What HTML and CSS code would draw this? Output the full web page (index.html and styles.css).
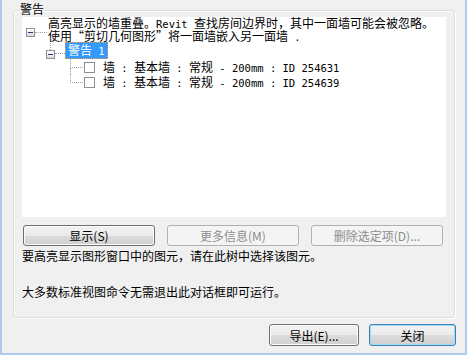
FILE: index.html
```html
<!DOCTYPE html>
<html lang="zh-CN">
<head>
  <meta charset="UTF-8">
  <title>警告</title>
  <link rel="stylesheet" href="styles.css">
</head>
<body>
  <div class="window">
    <fieldset class="group">
      <legend>警告</legend>

      <div class="tree">
        <div class="node-root">
          <div class="branch">
            <span class="toggle"></span>
            <span class="hline"></span>
          </div>
          <div class="root-text">高亮显示的墙重叠。<span class="en">Revit </span>查找房间边界时，其中一面墙可能会被忽略。<br>使用“剪切几何图形”将一面墙嵌入另一面墙<span class="en"> .</span></div>
        </div>

        <div class="node-warn">
          <div class="toggle-col">
            <span class="stem"></span>
            <span class="toggle"></span>
          </div>
          <span class="hline short"></span>
          <span class="label selected">警告<span class="en"> 1</span></span>
        </div>

        <div class="children">
          <div class="leaf">
            <span class="elbow"></span>
            <span class="check"></span>
            <span class="leaf-text">墙<span class="en"> : </span>基本墙<span class="en"> : </span>常规<span class="en"> - 200mm : ID 254631</span></span>
          </div>
          <div class="leaf">
            <span class="elbow"></span>
            <span class="check"></span>
            <span class="leaf-text">墙<span class="en"> : </span>基本墙<span class="en"> : </span>常规<span class="en"> - 200mm : ID 254639</span></span>
          </div>
        </div>
      </div>

      <div class="actions">
        <button class="btn wide">显示(S)</button>
        <button class="btn wide" disabled>更多信息(M)</button>
        <button class="btn wide" disabled>删除选定项(D)...</button>
      </div>

      <p class="hint">要高亮显示图形窗口中的图元，请在此树中选择该图元。</p>
      <p class="hint gap">大多数标准视图命令无需退出此对话框即可运行。</p>
    </fieldset>

    <div class="footer">
      <button class="btn export">导出(E)...</button>
      <button class="btn close default">关闭</button>
    </div>
  </div>
</body>
</html>
```

FILE: styles.css
```css
body {
  margin: 0;
  font-family: "Noto Sans CJK SC", "Liberation Sans", sans-serif;
  font-size: 12px;
  color: #000;
  background: #f0f0f0;
}
.window {
  box-sizing: border-box;
  width: 467px;
  height: 355px;
  padding-top: 3px;
  background: #f0f0f0;
  border: 2px solid #aecbec;
  border-top: 0;
}
.en {
  font-family: "DejaVu Sans Mono", "Liberation Mono", monospace;
  font-size: 10.5px;
}

/* group box */
.group {
  margin: 0 10px 0 11px;
  padding: 0 8px 19px 8px;
  border: 1px solid #d5dfe5;
  border-radius: 3px;
  box-shadow: inset 1px 1px 0 #fff, 1px 1px 0 #fff;
}
.group legend {
  margin-left: -3px;
  padding: 0 1px;
  line-height: 12px;
  height: 14px;
}

/* tree */
.tree {
  height: 200px;
  background: #fff;
  white-space: nowrap;
}
.node-root {
  display: flex;
  padding-left: 4px;
}
.branch {
  display: flex;
  align-items: center;
  height: 9px;
  margin-top: 11px;
}
.toggle {
  position: relative;
  box-sizing: border-box;
  width: 9px;
  height: 9px;
  border: 1px solid #919191;
  background: linear-gradient(#ffffff, #dcdcdc);
}
.toggle::after {
  content: "";
  position: absolute;
  left: 1px;
  top: 3px;
  width: 5px;
  height: 1px;
  background: #1e3c72;
}
.hline {
  width: 12px;
  height: 0;
  border-top: 1px dotted #a0a0a0;
}
.root-text {
  margin-left: 1px;
  line-height: 12px;
}
.node-warn {
  display: flex;
  height: 16px;
  padding-left: 24px;
}
.toggle-col {
  display: flex;
  flex-direction: column;
  width: 9px;
}
.stem {
  height: 7px;
  margin-left: 4px;
  border-left: 1px dotted #a0a0a0;
}
.hline.short {
  width: 10px;
  height: 5px;
  align-self: flex-end;
}
.label {
  align-self: flex-end;
  padding: 0 2px;
  line-height: 13px;
  border: 1px solid transparent;
}
.label.selected {
  background: #3399ff;
  color: #fff;
  border: 1px dotted #f29b3f;
}
.children {
  padding-left: 48px;
}
.leaf {
  display: flex;
  height: 15px;
  line-height: 15px;
}
.elbow {
  display: flex;
  flex-direction: column;
  width: 13px;
}
.elbow::before {
  content: "";
  height: 8px;
  border-left: 1px dotted #a0a0a0;
  border-bottom: 1px dotted #a0a0a0;
}
.elbow::after {
  content: "";
  flex: 1;
  border-left: 1px dotted #a0a0a0;
}
.leaf:last-child .elbow::after {
  border-left: 0;
}
.check {
  box-sizing: border-box;
  width: 11px;
  height: 11px;
  margin: 3px 0 0 1px;
  border: 1px solid #8e8f8f;
  background: #fff;
}
.leaf-text {
  margin-left: 8px;
}

/* buttons */
.btn {
  box-sizing: border-box;
  height: 21px;
  padding: 0;
  font-family: inherit;
  font-size: 12px;
  line-height: 19px;
  color: #000;
  border: 1px solid #707070;
  border-radius: 3px;
  background: linear-gradient(#f2f2f2 0%, #ebebeb 50%, #dddddd 50%, #cfcfcf 100%);
  box-shadow: inset 0 0 0 1px #fbfbfb;
}
.btn:disabled {
  color: #8d8d8d;
  border-color: #adb2b5;
  background: #f4f4f4;
  box-shadow: none;
}
.actions {
  display: flex;
  gap: 12px;
  margin-top: 8px;
  padding-left: 1px;
}
.btn.wide {
  width: 132px;
}
.hint {
  margin: 4px 0 0 0;
  line-height: 12px;
}
.hint.gap {
  margin-top: 24px;
}

.footer {
  display: flex;
  justify-content: flex-end;
  gap: 10px;
  margin-top: 6px;
  padding-right: 9px;
}
.btn.export {
  width: 90px;
  height: 22px;
}
.btn.close {
  width: 87px;
  height: 22px;
}
.btn.default {
  border-color: #3c7fb1;
  box-shadow: inset 0 0 0 1px #9fdcf7;
}
```
